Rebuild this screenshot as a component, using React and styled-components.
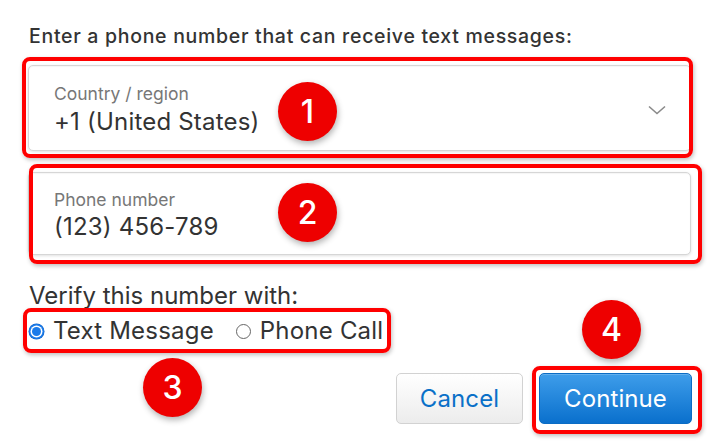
import styled, { createGlobalStyle } from 'styled-components'

const GlobalStyle = createGlobalStyle`
  html, body { margin: 0; padding: 0; background: #fff; }
  body {
    font-family: Inter, "Noto Sans", "Liberation Sans", sans-serif;
    color: #333;
    -webkit-font-smoothing: antialiased;
  }
`

const Page = styled.div`
  width: 715px;
  height: 448px;
  box-sizing: border-box;
  padding: 25px 24px 0 28px;
  display: flex;
  flex-direction: column;
`

const Title = styled.h1`
  margin: 0 0 0 1px;
  font-size: 19.5px;
  font-weight: 500;
  line-height: 22px;
  color: #333;
  letter-spacing: 0.7px;
  white-space: nowrap;
`

const FieldWrap = styled.div`
  position: relative;
  margin-top: ${p => p.$top}px;
`

const Field = styled.div`
  height: ${p => p.$height}px;
  box-sizing: border-box;
  border: 1px solid #d6d6d6;
  border-radius: 5px;
  background: #fff;
  box-shadow: 0 1px 3px rgba(0, 0, 0, 0.12), inset 0 1px 1px rgba(0, 0, 0, 0.04);
  padding: ${p => p.$padTop}px 25px 0;
  display: flex;
  align-items: flex-start;
  justify-content: space-between;
`

const FieldText = styled.div`
  display: flex;
  flex-direction: column;
`

const FieldLabel = styled.span`
  font-size: 17.5px;
  line-height: 20px;
  color: #777;
`

const FieldValue = styled.span`
  margin-top: ${p => p.$gap}px;
  font-size: 24px;
  line-height: 28px;
  color: #333;
  letter-spacing: 0.2px;
`

const Chevron = styled.svg`
  margin-top: 21px;
  margin-right: -1px;
`

const Highlight = styled.div`
  position: absolute;
  top: ${p => p.$t}px;
  left: ${p => p.$l}px;
  right: ${p => p.$r}px;
  bottom: ${p => p.$b}px;
  border: 4px solid #f00;
  border-radius: 8px;
  box-shadow: 1px 2px 4px rgba(0, 0, 0, 0.25);
  pointer-events: none;
`

const Badge = styled.div`
  position: absolute;
  top: ${p => p.$t}px;
  left: ${p => p.$l}px;
  width: 59px;
  height: 59px;
  border-radius: 50%;
  background: #ee0000;
  color: #fff;
  font-size: 32px;
  font-weight: 500;
  display: flex;
  align-items: center;
  justify-content: center;
  box-shadow: 1px 3px 6px rgba(0, 0, 0, 0.3);
  z-index: 2;
`

const VerifyLabel = styled.div`
  margin-top: 27px;
  margin-left: 1px;
  font-size: 24px;
  line-height: 28px;
  color: #333;
`

const RadioGroup = styled.div`
  position: relative;
  align-self: flex-start;
  margin-top: 7px;
  display: flex;
  align-items: center;
  gap: 22px;
  padding-left: 1px;
`

const RadioOption = styled.label`
  display: flex;
  align-items: center;
  gap: 9px;
  font-size: 24px;
  line-height: 28px;
  letter-spacing: 0.2px;
  color: #333;
`

const RadioDot = styled.span`
  width: 15px;
  height: 15px;
  box-sizing: border-box;
  border-radius: 50%;
  border: 1.5px solid #666;
  background: #fff;
  position: relative;
  ${p =>
    p.$checked &&
    `
    border: none;
    background: #1b7bea;
    box-shadow: 0 0 0 0.5px #0e63c9;
    &::after {
      content: '';
      position: absolute;
      inset: 3px;
      border-radius: 50%;
      background: #1b7bea;
      box-shadow: 0 0 0 1.5px #fff;
    }
  `}
`

const ButtonRow = styled.div`
  margin-top: 28px;
  margin-right: -1px;
  display: flex;
  justify-content: flex-end;
  gap: 16px;
`

const Button = styled.button`
  position: relative;
  height: 51px;
  width: ${p => p.$width}px;
  border-radius: 5px;
  font-family: inherit;
  font-size: 24px;
  letter-spacing: 0.1px;
  cursor: pointer;
  border: 1px solid ${p => (p.$primary ? '#0b6cc4' : '#d2d2d2')};
  color: ${p => (p.$primary ? '#fff' : '#0a70c8')};
  background: ${p =>
    p.$primary
      ? 'linear-gradient(#3e9dea, #0a70cd)'
      : 'linear-gradient(#ffffff, #ececec)'};
  box-shadow: ${p => (p.$primary ? 'inset 0 1px 0 rgba(255,255,255,0.2)' : 'none')};
`

function ChevronDown() {
  return (
    <Chevron width="18" height="10" viewBox="0 0 18 10">
      <path d="M1 1.5 L9 8.5 L17 1.5" fill="none" stroke="#8a8a8a" strokeWidth="1.6" />
    </Chevron>
  )
}

export default function App() {
  return (
    <>
      <GlobalStyle />
      <Page>
        <Title>Enter a phone number that can receive text messages:</Title>

        <FieldWrap $top={18}>
          <Field $height={86} $padTop={18}>
            <FieldText>
              <FieldLabel>Country / region</FieldLabel>
              <FieldValue $gap={4}>+1 (United States)</FieldValue>
            </FieldText>
            <ChevronDown />
          </Field>
          <Highlight $t={-8} $l={-6} $r={-2} $b={-7} />
          <Badge $t={17} $l={250}>1</Badge>
        </FieldWrap>

        <FieldWrap $top={21}>
          <Field $height={83} $padTop={17}>
            <FieldText>
              <FieldLabel>Phone number</FieldLabel>
              <FieldValue $gap={3}>(123) 456-789</FieldValue>
            </FieldText>
          </Field>
          <Highlight $t={-8} $l={1} $r={-11} $b={-9} />
          <Badge $t={11} $l={250}>2</Badge>
        </FieldWrap>

        <VerifyLabel>Verify this number with:</VerifyLabel>

        <RadioGroup>
          <RadioOption>
            <RadioDot $checked />
            Text Message
          </RadioOption>
          <RadioOption>
            <RadioDot />
            Phone Call
          </RadioOption>
          <Highlight $t={-9} $l={-5} $r={-8} $b={-8} />
          <Badge $t={41} $l={115}>3</Badge>
        </RadioGroup>

        <ButtonRow>
          <Button $width={127}>Cancel</Button>
          <Button $primary $width={153}>
            Continue
            <Highlight $t={-8} $l={-8} $r={-11} $b={-11} />
            <Badge $t={-74} $l={42}>4</Badge>
          </Button>
        </ButtonRow>
      </Page>
    </>
  )
}
